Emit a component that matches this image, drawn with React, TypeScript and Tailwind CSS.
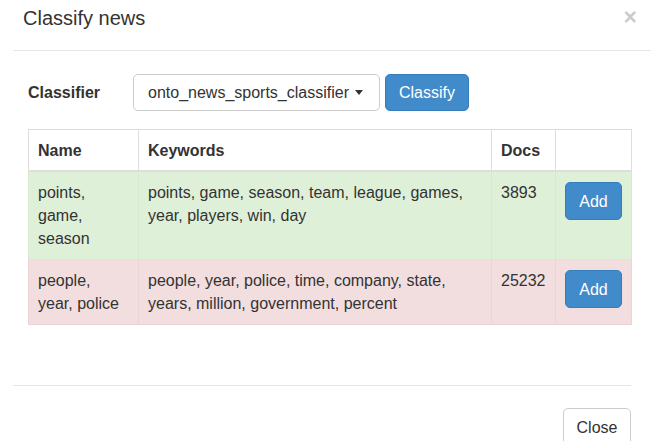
import React from "react";

type Topic = {
  name: string;
  keywords: string;
  docs: number;
  tone: "success" | "danger";
};

const topics: Topic[] = [
  {
    name: "points, game, season",
    keywords: "points, game, season, team, league, games, year, players, win, day",
    docs: 3893,
    tone: "success",
  },
  {
    name: "people, year, police",
    keywords:
      "people, year, police, time, company, state, years, million, government, percent",
    docs: 25232,
    tone: "danger",
  },
];

const rowStyles = {
  success: "bg-[#dff0d8]",
  danger: "bg-[#f2dede]",
};

const cellBorder = {
  success: "border-[#d9e8d0]",
  danger: "border-[#ebd3d6]",
};

const App: React.FC = () => {
  return (
    <div className="w-[651px] h-[441px] overflow-hidden bg-white text-[#333] font-['Liberation_Sans',Arial,sans-serif] text-[16px] leading-[23px]">
      <div className="ml-[13px]">
        {/* header */}
        <div className="h-[51px] pt-[4px] pl-[10px] pr-[14px] flex items-start justify-between border-b border-[#e5e5e5]">
          <h4 className="text-[20px] leading-[29px]">Classify news</h4>
          <button className="text-[23px] leading-[26px] font-bold text-black opacity-20">
            ×
          </button>
        </div>

        {/* body */}
        <div className="pt-[23px] pl-[15px] w-[618px] h-[334px]">
          <div className="flex items-center h-[37px]">
            <label className="font-bold w-[105px]">Classifier</label>
            <button className="h-[37px] w-[247px] px-[14px] flex items-center justify-between border border-[#ccc] rounded-[5px] bg-white">
              <span>onto_news_sports_classifier</span>
              <span className="w-0 h-0 border-l-[4px] border-r-[4px] border-t-[5px] border-l-transparent border-r-transparent border-t-[#333] mr-[2px]" />
            </button>
            <button className="ml-[5px] h-[37px] w-[84px] rounded-[5px] bg-[#428bca] border border-[#357ebd] text-white">
              Classify
            </button>
          </div>

          <table className="mt-[18px] w-[603px] table-fixed border-collapse border border-[#ddd]">
            <colgroup>
              <col className="w-[110px]" />
              <col className="w-[353px]" />
              <col className="w-[64px]" />
              <col className="w-[76px]" />
            </colgroup>
            <thead>
              <tr>
                <th className="text-left align-bottom px-[9px] pt-[9px] pb-[8px] border border-b-2 border-[#ddd]">
                  Name
                </th>
                <th className="text-left align-bottom px-[9px] pt-[9px] pb-[8px] border border-b-2 border-[#ddd]">
                  Keywords
                </th>
                <th className="text-left align-bottom px-[9px] pt-[9px] pb-[8px] border border-b-2 border-[#ddd]">
                  Docs
                </th>
                <th className="px-[9px] pt-[9px] pb-[8px] border border-b-2 border-[#ddd]" />
              </tr>
            </thead>
            <tbody>
              {topics.map((t) => (
                <tr key={t.name} className={rowStyles[t.tone]}>
                  <td className={`align-top p-[9px] border ${cellBorder[t.tone]}`}>
                    {t.name}
                  </td>
                  <td className={`align-top p-[9px] border ${cellBorder[t.tone]}`}>
                    {t.keywords}
                  </td>
                  <td className={`align-top p-[9px] border ${cellBorder[t.tone]}`}>
                    {t.docs}
                  </td>
                  <td className={`align-top p-[9px] border ${cellBorder[t.tone]}`}>
                    <button className="mt-[1px] h-[38px] w-[57px] rounded-[5px] bg-[#428bca] border border-[#357ebd] text-white">
                      Add
                    </button>
                  </td>
                </tr>
              ))}
            </tbody>
          </table>
        </div>

        {/* footer */}
        <div className="border-t border-[#e5e5e5] pt-[22px] w-[618px] flex justify-end">
          <button className="h-[38px] w-[68px] rounded-[5px] border border-[#ccc] bg-white">
            Close
          </button>
        </div>
      </div>
    </div>
  );
};

export default App;
